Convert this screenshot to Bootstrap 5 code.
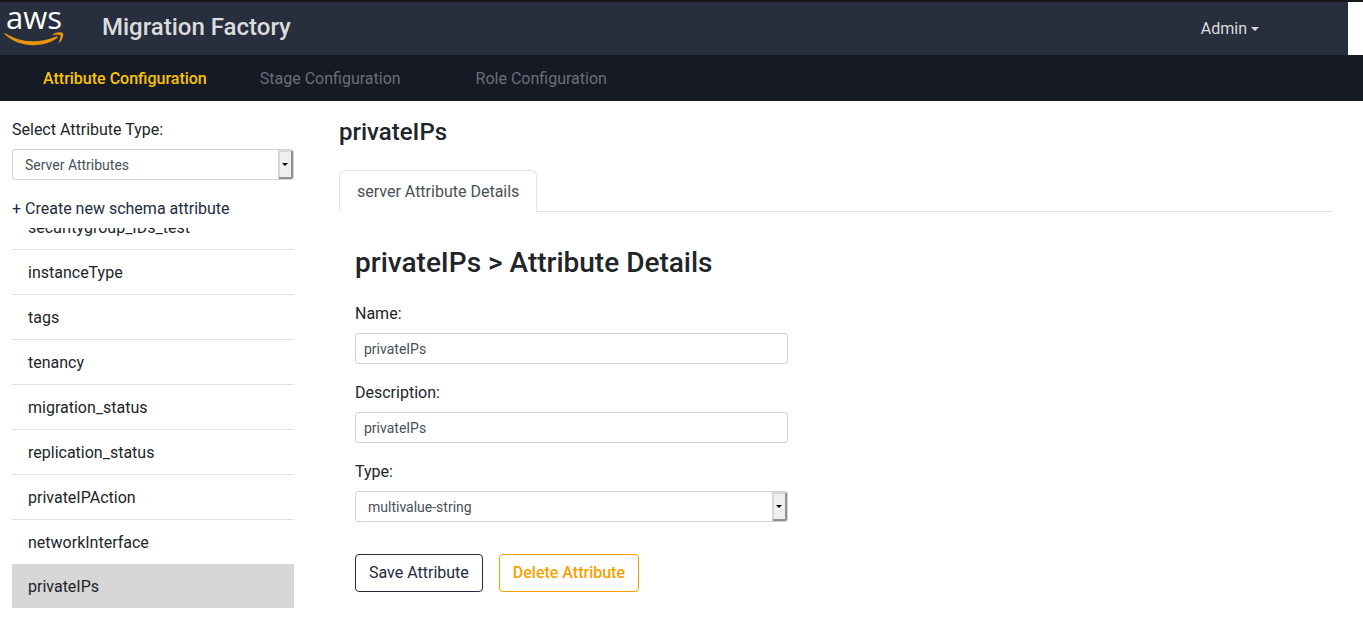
<!DOCTYPE html>
<html lang="en">
<head>
<meta charset="utf-8">
<meta name="viewport" content="width=device-width, initial-scale=1">
<title>Migration Factory</title>
<link href="https://cdn.jsdelivr.net/npm/bootstrap@5.3.0/dist/css/bootstrap.min.css" rel="stylesheet">
<style>
  body { font-family: Roboto, Inter, sans-serif; font-size: 16px; line-height: 24px; color: #212529; border-top: 2px solid #17181a; }
  h1, h2, .brand-title { font-weight: 500; }
  a { text-decoration: none; }
  .top-bar { background: #272e3d; height: 53px; margin-right: 15px; padding: 0 89px 0 4px; }
  .top-bar svg { width: 61px; height: 44px; overflow: visible; }
  .logo-word { font: 500 31px "Open Sans", sans-serif; fill: #fff; }
  .brand-title { font-size: 24px; color: #dcdcdc; margin: 0 0 4px 37px; }
  .account { color: #dcdcdc; }
  .account::after { margin-left: 4px; vertical-align: 3px; border-width: 4px 4px 0; }
  .sub-bar { background: #161a24; height: 46px; padding: 2px 43px 0; gap: 53px; }
  .sub-bar a { color: #6c6f78; }
  .sub-bar a.active { color: #f9c500; font-weight: 500; }
  .sub-bar a + a + a { margin-left: 22px; }
  .page { padding: 17px 30px 16px 12px; gap: 45px; }
  .side { width: 282px; }
  .form-label { margin-bottom: 7px; }
  .form-control, .form-select { font-size: 14px; line-height: 21px; height: 31px; padding: 4px 8px; color: #495057; border-color: #ced4da; border-radius: 3px; }
  .form-select {
    padding: 5px 20px 3px 12px;
    background: url("data:image/svg+xml,%3Csvg xmlns='http://www.w3.org/2000/svg' width='15' height='29'%3E%3Cpath fill='%23efefef' d='M0 0h15v29H0z'/%3E%3Cpath fill='%23d8d8d8' d='M0 0h15v2H2v27H0z'/%3E%3Cpath fill='%23909090' d='M13 1h2v28H1v-2h12z'/%3E%3Cpath d='M4 13h6l-3 3z'/%3E%3C/svg%3E") right center / 15px 29px no-repeat #fff;
  }
  .create-link { color: #232b3e; margin-top: 17px; }
  .attr-list { height: 380px; margin-top: 7px; overflow: hidden; justify-content: flex-end; }
  .attr-list .list-group-item { flex: none; padding: 11px 16px 9px; color: #212529; border-color: #dfdfdf; }
  .attr-list .list-group-item.active { background: #d6d6d6; border: 0; }
  .item-title { font-size: 24px; line-height: 28px; margin: 0 0 24px; }
  .nav-tabs .nav-link { padding: 9px 17px 7px; }
  .nav-tabs .nav-link.active { color: #495057; }
  .tab-body { padding: 34px 16px 0; }
  .tab-body h2 { font-size: 28px; line-height: 34px; margin-bottom: 22px; }
  .attr-form { width: 45%; }
  .field { margin-bottom: 17px; }
  .btn { font-size: 16px; line-height: 24px; padding: 6px 13px; border-radius: 4px; }
  .btn-save { color: #232b3e; border-color: #232b3e; }
  .btn-remove { color: #f5a200; border-color: #f5a200; font-weight: 500; }
  .actions { gap: 16px; padding-top: 15px; }
</style>
</head>
<body>
<header class="top-bar d-flex align-items-center">
  <svg viewBox="0 0 61 44" role="img" aria-label="aws">
    <text class="logo-word" x="2" y="22">aws</text>
    <g fill="#e8940f" transform="translate(0 1)">
    <path d="M1.200 25.200c8 5 17 8 28 8 8 0 16-1.800 23-4.800 1.200-.5 2 .8 1 1.600-6.500 4.800-15.500 7.200-24 7.200-11 0-21-4.200-28.400-10.800-.7-.7-.4-1.500.4-1.200z"/>
    <path d="M48.600 26.300c2.800-2 8.900-2.800 10.200-1.300 1.200 1.500-.3 7.200-3.200 9.600-.6.500-1.100.2-.8-.5.8-2 2.100-5.700 1.500-6.700-.8-1-5-.7-7.200-.4-.8.100-.9-.4-.5-.7z"/>
    </g>
  </svg>
  <span class="brand-title">Migration Factory</span>
  <a href="#" class="account dropdown-toggle ms-auto" data-bs-toggle="dropdown">Admin</a>
</header>
<nav class="sub-bar d-flex align-items-center">
  <a href="#" class="active">Attribute Configuration</a>
  <a href="#">Stage Configuration</a>
  <a href="#">Role Configuration</a>
</nav>
<div class="page d-flex align-items-start">
  <aside class="side flex-shrink-0">
    <label class="form-label d-block" for="schema">Select Attribute Type:</label>
    <select id="schema" class="form-select"><option>Server Attributes</option></select>
    <a href="#" class="create-link d-block">+ Create new schema attribute</a>
    <div class="attr-list list-group list-group-flush">
      <a href="#" class="list-group-item">securitygroup_IDs_test</a>
      <a href="#" class="list-group-item">instanceType</a>
      <a href="#" class="list-group-item">tags</a>
      <a href="#" class="list-group-item">tenancy</a>
      <a href="#" class="list-group-item">migration_status</a>
      <a href="#" class="list-group-item">replication_status</a>
      <a href="#" class="list-group-item">privateIPAction</a>
      <a href="#" class="list-group-item">networkInterface</a>
      <a href="#" class="list-group-item active">privateIPs</a>
    </div>
  </aside>
  <main class="flex-grow-1">
    <h1 class="item-title">privateIPs</h1>
    <ul class="nav nav-tabs">
      <li class="nav-item"><a class="nav-link active" href="#">server Attribute Details</a></li>
    </ul>
    <div class="tab-body">
      <h2>privateIPs &gt; Attribute Details</h2>
      <form class="attr-form">
        <div class="field">
          <label class="form-label d-block" for="name">Name:</label>
          <input id="name" class="form-control" type="text" value="privateIPs">
        </div>
        <div class="field">
          <label class="form-label d-block" for="desc">Description:</label>
          <input id="desc" class="form-control" type="text" value="privateIPs">
        </div>
        <div class="field">
          <label class="form-label d-block" for="type">Type:</label>
          <select id="type" class="form-select"><option>multivalue-string</option></select>
        </div>
        <div class="actions d-flex text-nowrap">
          <button type="button" class="btn btn-save">Save Attribute</button>
          <button type="button" class="btn btn-remove">Delete Attribute</button>
        </div>
      </form>
    </div>
  </main>
</div>
<script src="https://cdn.jsdelivr.net/npm/bootstrap@5.3.0/dist/js/bootstrap.bundle.min.js"></script>
</body>
</html>
